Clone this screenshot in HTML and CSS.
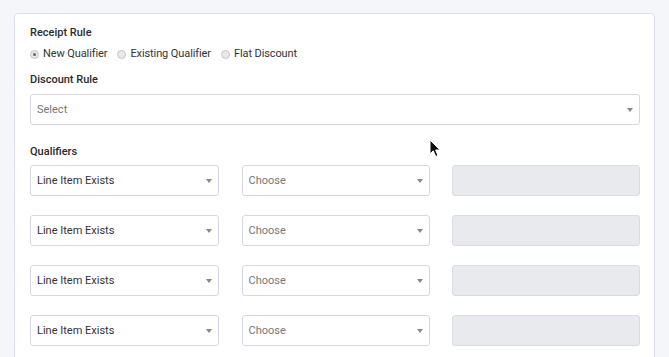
FILE: index.html
```html
<!DOCTYPE html>
<html lang="en">
<head>
<meta charset="UTF-8">
<meta name="viewport" content="width=device-width, initial-scale=1.0">
<title>Receipt Rule</title>
<link rel="stylesheet" href="styles.css">
</head>
<body>

<div class="card">
    <div class="field-label">Receipt Rule</div>
    <div class="radios">
        <label class="radio"><span class="dot checked"></span>New Qualifier</label>
        <label class="radio"><span class="dot"></span>Existing Qualifier</label>
        <label class="radio"><span class="dot"></span>Flat Discount</label>
    </div>

    <div class="field-label gap-top">Discount Rule</div>
    <div class="select wide"><span class="placeholder">Select</span><span class="caret"></span></div>

    <div class="field-label qual-label">Qualifiers</div>
    <div class="qualifiers">
        <div class="select"><span>Line Item Exists</span><span class="caret"></span></div>
        <div class="select"><span class="placeholder">Choose</span><span class="caret"></span></div>
        <div class="input disabled"></div>

        <div class="select"><span>Line Item Exists</span><span class="caret"></span></div>
        <div class="select"><span class="placeholder">Choose</span><span class="caret"></span></div>
        <div class="input disabled"></div>

        <div class="select"><span>Line Item Exists</span><span class="caret"></span></div>
        <div class="select"><span class="placeholder">Choose</span><span class="caret"></span></div>
        <div class="input disabled"></div>

        <div class="select"><span>Line Item Exists</span><span class="caret"></span></div>
        <div class="select"><span class="placeholder">Choose</span><span class="caret"></span></div>
        <div class="input disabled"></div>
    </div>
</div>

<svg class="cursor" width="13" height="19" viewBox="0 0 13 19">
    <path d="M1 1 L1 15 L4.2 11.8 L6.7 17.5 L9 16.5 L6.6 11 L11 11 Z" fill="#111" stroke="#fff" stroke-width="1"/>
</svg>

</body>
</html>
```

FILE: styles.css
```css
body {
    margin: 0;
    padding: 0;
    background: #f5f6fa;
    font-family: Roboto, 'Liberation Sans', sans-serif;
    color: #333;
    overflow: hidden;
}

.card {
    margin: 13px 0 0 14px;
    width: 610px;
    height: 360px;
    padding: 12px 14px 0 15px;
    background: #fff;
    border: 1px solid #dcdfea;
    border-radius: 4px;
}

.field-label {
    font-size: 11px;
    line-height: 14px;
    font-weight: 500;
    color: #2b2b2b;
}

.gap-top {
    margin-top: 12px;
}

.qual-label {
    margin-top: 20px;
}

.radios {
    display: flex;
    gap: 10px;
    margin-top: 7px;
    font-size: 11px;
    line-height: 14px;
    color: #333;
    letter-spacing: -0.1px;
}

.radio {
    display: flex;
    align-items: center;
    gap: 4px;
}

.dot {
    width: 7px;
    height: 7px;
    border: 1px solid #c4c4c4;
    border-radius: 50%;
    background: #e9e9e9;
    position: relative;
}

.dot.checked::after {
    content: "";
    position: absolute;
    left: 2px;
    top: 2px;
    width: 3px;
    height: 3px;
    border-radius: 50%;
    background: #666;
}

.select,
.input {
    box-sizing: border-box;
    height: 31px;
    border: 1px solid #d4d8e6;
    border-radius: 3px;
    background: #fff;
    display: flex;
    align-items: center;
    justify-content: space-between;
    padding: 0 6px 0 6px;
    font-size: 11px;
    color: #333;
}

.select.wide {
    margin-top: 7px;
}

.placeholder {
    color: #777;
}

.caret {
    width: 0;
    height: 0;
    border-left: 3px solid transparent;
    border-right: 3px solid transparent;
    border-top: 4px solid #888;
}

.input.disabled {
    background: #e9eaee;
    border-color: #d9dce4;
}

.qualifiers {
    display: grid;
    grid-template-columns: 189px 188px 188px;
    justify-content: space-between;
    row-gap: 19px;
    margin-top: 6px;
}

.cursor {
    position: absolute;
    left: 429px;
    top: 139px;
}
```
